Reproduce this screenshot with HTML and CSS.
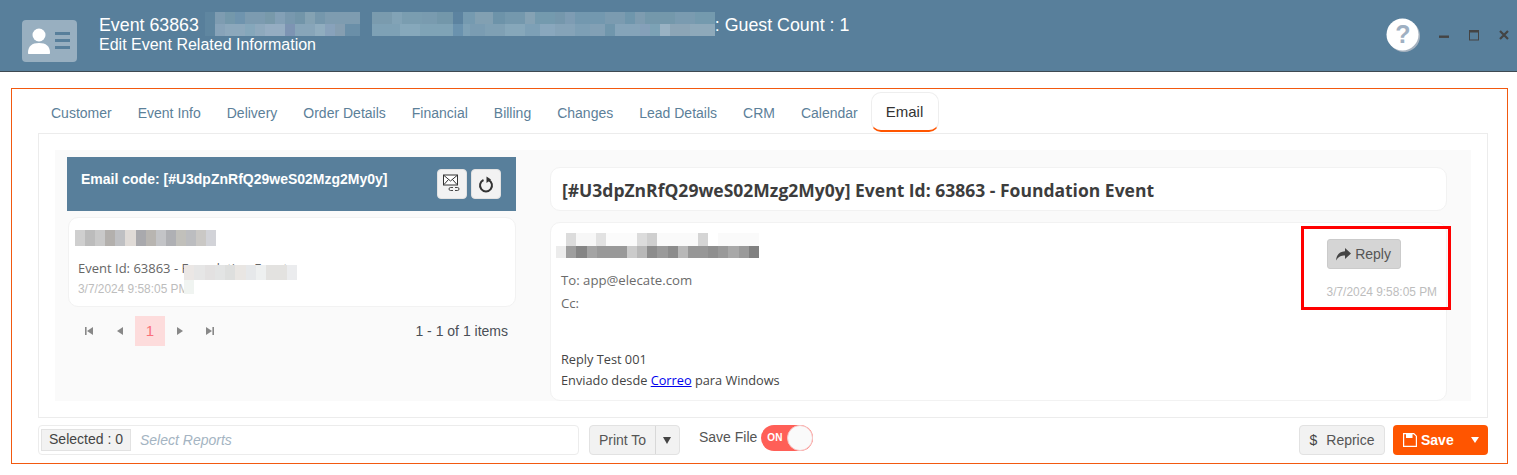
FILE: index.html
```html
<!DOCTYPE html>
<html lang="en">
<head>
  <meta charset="UTF-8">
  <title>Event 63863</title>
  <link rel="stylesheet" href="styles.css">
</head>
<body>
  <header class="topbar">
    <div class="topbar-icon">
      <svg width="55" height="42" viewBox="0 0 55 42">
        <circle cx="17" cy="15" r="6.5" fill="#fff"/>
        <path d="M6 33c0-7 4-10 11-10s11 3 11 10c0 .6-.4 1-1 1H7c-.6 0-1-.4-1-1z" fill="#fff"/>
        <rect x="33" y="12" width="15" height="3" fill="#587f9b"/>
        <rect x="33" y="19" width="15" height="3" fill="#587f9b"/>
        <rect x="33" y="26" width="15" height="3" fill="#587f9b"/>
      </svg>
    </div>
    <div class="topbar-text">
      <div class="topbar-title">
        <span>Event 63863</span>
        <span class="blur blur-guest"></span>
        <span>: Guest Count : 1</span>
      </div>
      <div class="topbar-sub">Edit Event Related Information</div>
    </div>
    <div class="topbar-actions">
      <svg class="help" width="35" height="35" viewBox="0 0 35 35">
        <circle cx="18" cy="18" r="16" fill="#a5b2bf"/>
        <circle cx="16.5" cy="16.5" r="16" fill="#fff"/>
        <text x="17" y="25" text-anchor="middle" class="help-mark">?</text>
      </svg>
      <svg width="10" height="10" viewBox="0 0 10 10" class="win-min"><rect y="5.5" width="10" height="2.4" fill="#444"/></svg>
      <svg width="10" height="11" viewBox="0 0 10 11" class="win-max"><rect x=".5" y="1" width="9" height="9" fill="none" stroke="#444"/><rect width="10" height="2.5" fill="#444"/></svg>
      <svg width="10" height="10" viewBox="0 0 10 10"><path d="M1 1l8 8M9 1l-8 8" stroke="#444" stroke-width="2.2"/></svg>
    </div>
  </header>

  <main class="panel">
    <nav class="tabs">
      <a class="tab">Customer</a>
      <a class="tab">Event Info</a>
      <a class="tab">Delivery</a>
      <a class="tab">Order Details</a>
      <a class="tab">Financial</a>
      <a class="tab">Billing</a>
      <a class="tab">Changes</a>
      <a class="tab">Lead Details</a>
      <a class="tab">CRM</a>
      <a class="tab">Calendar</a>
      <a class="tab active">Email</a>
    </nav>

    <section class="tab-body">
      <div class="email-area">
        <div class="email-list">
          <div class="list-head">
            <span class="list-code">Email code: [#U3dpZnRfQ29weS02Mzg2My0y]</span>
            <div class="list-btns">
              <button class="icon-btn">
                <svg width="18" height="20" viewBox="0 0 18 20">
                  <rect x=".5" y="1" width="14" height="10" fill="#fff" stroke="#333"/>
                  <path d="M1 1.500l6.500 5.500L14 1.500M1 10.500l4.500-5M14 10.500l-4.500-5" fill="none" stroke="#333"/>
                  <path d="M10 13.500H7.500a1.500 1.500 0 0 0 0 3H10M12 13.500h2.500a1.500 1.500 0 0 1 0 3H12" fill="none" stroke="#333" stroke-width=".9"/>
                </svg>
              </button>
              <button class="icon-btn">
                <svg width="16" height="18" viewBox="0 0 16 18">
                  <path d="M5.500 5a6 6 0 1 0 5 0" fill="none" stroke="#333" stroke-width="2"/>
                  <path d="M8.500 1.500v6.500L13 4.500z" fill="#333"/>
                </svg>
              </button>
            </div>
          </div>
          <div class="list-card">
            <span class="blur blur-sender"></span>
            <div class="list-subject">Event Id: 63863 - Foundation Event</div>
            <div class="stamp">3/7/2024 9:58:05 PM</div>
            <span class="blur blur-subject"></span>
            <span class="blur blur-subject-2"></span>
          </div>
          <div class="pager">
            <svg class="pg-icon" width="8" height="8" viewBox="0 0 8 8"><path d="M0 0h1.600v8H0zM8 0v8L2 4z"/></svg>
            <svg class="pg-icon" width="8" height="8" viewBox="0 0 8 8"><path d="M7 0v8L1 4z"/></svg>
            <span class="pg-num">1</span>
            <svg class="pg-icon" width="8" height="8" viewBox="0 0 8 8"><path d="M1 0v8l6-4z"/></svg>
            <svg class="pg-icon" width="8" height="8" viewBox="0 0 8 8"><path d="M0 0v8l6-4zM6.400 0H8v8H6.400z"/></svg>
            <span class="pg-info">1 - 1 of 1 items</span>
          </div>
        </div>

        <div class="email-view">
          <h2 class="view-title">[#U3dpZnRfQ29weS02Mzg2My0y] Event Id: 63863 - Foundation Event</h2>
          <div class="mail-card">
            <div class="mail-info">
              <span class="blur blur-from"></span>
              <div class="mail-line mail-to">To: app@elecate.com</div>
              <div class="mail-line mail-cc">Cc:</div>
              <div class="mail-line mail-msg">Reply Test 001</div>
              <div class="mail-line mail-sent">Enviado desde <a href="#">Correo</a> para Windows</div>
            </div>
            <div class="mail-side">
              <button class="reply-btn">
                <svg width="15" height="13" viewBox="0 0 15 13"><path d="M9 0l6 5.500L9 11V7.500C5 7.500 2.500 8.500 0 12.500 .5 7 3.500 3.500 9 3.300z" fill="#444"/></svg>
                Reply
              </button>
              <div class="stamp">3/7/2024 9:58:05 PM</div>
            </div>
            <div class="callout"></div>
          </div>
        </div>
      </div>
    </section>

    <footer class="actions">
      <div class="report-box">
        <span class="report-tag">Selected : 0</span>
        <span class="report-hint">Select Reports</span>
      </div>
      <div class="print-btn">
        <span class="print-label">Print To</span>
        <span class="print-caret"></span>
      </div>
      <span class="save-file">Save File</span>
      <div class="toggle"><span class="toggle-on">ON</span><span class="toggle-knob"></span></div>
      <button class="reprice-btn"><span class="dollar">$</span>Reprice</button>
      <div class="save-btn">
        <svg width="14" height="14" viewBox="0 0 14 14"><path d="M.6.600h10.200l2.600 2.600v10.200H.6z" fill="none" stroke="#fff" stroke-width="1.200"/><rect x="3" y="1" width="6.500" height="4" fill="#fff"/></svg>
        <span class="save-label">Save</span>
        <span class="save-caret"></span>
      </div>
    </footer>
  </main>
</body>
</html>
```

FILE: styles.css
```css
html, body {
  margin: 0;
  padding: 0;
  background: #fff;
  font-family: 'Liberation Sans', Arial, sans-serif;
  font-size: 14px;
  overflow: hidden;
}
.topbar {
  height: 71px;
  box-sizing: content-box;
  background: #587f9b;
  border-bottom: 1px solid #3e4a52;
  display: flex;
  align-items: flex-start;
  color: #fff;
}
.topbar-icon {
  width: 55px;
  height: 42px;
  margin: 20px 0 0 22px;
  background: #98afc0;
  border-radius: 4px;
}
.topbar-text {
  margin: 15px 0 0 22px;
  font-size: 16px;
  line-height: 20px;
}
.topbar-title {
  display: flex;
  align-items: center;
  height: 20px;
  font-size: 17.800px;
}
.topbar-actions {
  margin: 18px 8px 0 auto;
  display: flex;
  align-items: flex-start;
}
.help {
  margin-right: 18px;
}
.help-mark {
  font: bold 25px 'Liberation Sans', Arial, sans-serif;
  fill: #9fb0c2;
}
.topbar-actions svg + svg {
  margin-top: 12px;
  margin-right: 20px;
}
.topbar-actions svg:last-child {
  margin-right: 0;
}
.blur {
  display: block;
  flex: none;
}
.blur-guest {
  width: 510px;
  height: 24px;
  margin: -2px 0 0 6px;
  background:
    linear-gradient(90deg, #5f86a0 0 10px, #7e9cb1 10px 20px, #7498ab 20px 30px, #6f94ae 30px 40px, #7c9bb0 40px 60px, #7899aa 60px 70px, #83a0b6 70px 80px, #7898ae 80px 90px, #7295a9 90px 100px, #84a2b3 100px 110px, #7597ac 110px 120px, #7e9cb0 120px 155px, #587f9b 155px 167px, #7a9bae 167px 187px, #82a3b6 187px 197px, #7a9db0 197px 217px, #799baf 217px 232px, #7397aa 232px 248px, #5c83a0 248px 258px, #759ab0 258px 270px, #82a0b2 270px 288px, #6d93a9 288px 300px, #7498ad 300px 320px, #85a2b4 320px 330px, #749aae 330px 350px, #7597ac 350px 360px, #7e9cb3 360px 370px, #7398af 370px 400px, #7b9bb0 400px 420px, #6f96ac 420px 430px, #7e9cb0 430px 440px, #7498ab 440px 470px, #7a9bb0 470px 490px, #749aae 490px 510px) top / 100% 50% no-repeat,
    linear-gradient(90deg, #5f86a0 0 10px, #87a3b9 10px 20px, #8ca8bc 20px 40px, #85a7bb 40px 50px, #8ea9bd 50px 60px, #95adc2 60px 80px, #7d94b3 80px 90px, #87a5b9 90px 110px, #90adbf 110px 120px, #88a2bb 120px 130px, #859eb1 130px 140px, #6a8fa8 140px 155px, #587f9b 155px 167px, #7ea1b5 167px 195px, #86a8bb 195px 215px, #7fa3b6 215px 248px, #6a92ae 248px 258px, #7ea1b6 258px 265px, #7a9cb2 265px 280px, #7fa0b4 280px 300px, #86a7ba 300px 320px, #7da0b6 320px 335px, #89a7bd 335px 350px, #85a3b8 350px 370px, #7d9fb5 370px 385px, #82a0b5 385px 400px, #7096ac 400px 410px, #85a4b9 410px 435px, #85a0b9 435px 445px, #7ca2b5 445px 455px, #99b2c3 455px 465px, #8ca5b6 465px 485px, #8ea9ba 485px 510px) bottom / 100% 50% no-repeat;
}
.panel {
  margin: 16px 9px 0 11px;
  height: 371px;
  border: 1px solid #f2590f;
  padding: 3px 19px 0 26px;
}
.tabs {
  display: flex;
  height: 41px;
  align-items: stretch;
}
.tab {
  padding: 0 13px;
  line-height: 42px;
  color: #5c8099;
}
.tab.active {
  padding: 0 15px 0 14px;
  font-size: 15px;
  color: #333;
  line-height: 38px;
  background: #fff;
  border: 1px solid #eee;
  border-bottom: 2px solid #ff5500;
  border-radius: 10px;
  height: 37px;
}
.tab-body {
  height: 251px;
  border: 1px solid #ececec;
  padding: 16px;
}
.email-area {
  height: 100%;
  background: #fafafa;
  display: flex;
  padding: 7px 24px 0 12px;
  box-sizing: border-box;
}
.email-list {
  width: 449px;
  flex: none;
}
.list-head {
  height: 54px;
  background: #587f9b;
  display: flex;
  justify-content: space-between;
  padding: 12px 15px 0 14px;
  box-sizing: border-box;
  color: #fff;
}
.list-code {
  font-size: 14px;
  font-weight: bold;
  line-height: 20px;
}
.list-btns {
  display: flex;
  gap: 4px;
}
.icon-btn {
  width: 30px;
  height: 30px;
  padding: 0;
  background: #f2f2f2;
  border: 1px solid #e2e2e2;
  border-radius: 4px;
  display: flex;
  align-items: center;
  justify-content: center;
}
.list-card {
  position: relative;
  margin: 6px 0 0 1px;
  height: 90px;
  background: #fff;
  border: 1px solid #f2f2f2;
  border-radius: 10px;
  box-sizing: border-box;
  padding: 12px 9px 0;
  font-family: 'Open Sans', sans-serif;
  color: #666;
}
.blur-sender {
  width: 141px;
  height: 16px;
  margin-left: -3px;
  background: linear-gradient(90deg, #cfcfcf 0 10px, #bcbcbc 10px 20px, #c9c9c9 20px 30px, #b3b0ad 30px 40px, #bfc0c3 40px 50px, #e0dbd7 50px 61px, #a9a9ad 61px 71px, #b8b5b1 71px 81px, #c3c4c7 81px 91px, #afb0b4 91px 101px, #c1c0bb 101px 111px, #bcbdc0 111px 121px, #cac8c5 121px 131px, #d2d3d8 131px 141px);
}
.list-subject {
  margin-top: 13px;
  font-size: 13px;
  line-height: 18px;
}
.stamp {
  font-family: 'Liberation Sans', Arial, sans-serif;
  font-size: 11.900px;
  color: #bdbdbd;
  line-height: 14px;
}
.list-card .stamp {
  margin-top: 5px;
}
.blur-subject {
  position: absolute;
  left: 115px;
  top: 47px;
  width: 113px;
  height: 15px;
  background: linear-gradient(90deg, #ebe7e5 0 10px, #e6e6e6 10px 21px, #e3e1e1 21px 31px, #e3e4e4 31px 41px, #dedfde 41px 51px, #e9e6e3 51px 62px, #e6e8ea 62px 72px, #eef0f0 72px 82px, #e3e2e0 82px 103px, #ebecee 103px 113px);
}
.blur-subject-2 {
  position: absolute;
  left: 115px;
  top: 62px;
  width: 10px;
  height: 14px;
  background: #f0f4f1;
}
.pager {
  height: 30px;
  margin-top: 9px;
  display: flex;
  align-items: center;
  padding-left: 18px;
}
.pg-icon {
  fill: #888;
  margin-right: 23px;
}
.pg-num {
  width: 30px;
  height: 30px;
  margin: 0 11px 0 -12px;
  background: #fddcdc;
  color: #f9707a;
  font-size: 15px;
  text-align: center;
  line-height: 30px;
}
.pager .pg-icon:nth-of-type(3) {
  margin-right: 22px;
}
.pg-info {
  margin-left: auto;
  margin-right: 8px;
  color: #4a4f57;
}
.email-view {
  margin-left: 34px;
  width: 897px;
  flex: none;
}
.view-title {
  margin: 10px 0 0;
  height: 44px;
  box-sizing: border-box;
  background: #fff;
  border: 1px solid #f2f2f2;
  border-radius: 10px;
  padding-left: 11px;
  font: bold 17.500px/44px 'Open Sans', sans-serif;
  color: #3d3d3d;
}
.mail-card {
  position: relative;
  margin-top: 11px;
  height: 179px;
  box-sizing: border-box;
  background: #fff;
  border: 1px solid #f2f2f2;
  border-radius: 10px;
  display: flex;
  justify-content: space-between;
  padding: 10px 9px 0 10px;
}
.blur-from {
  width: 203px;
  height: 37px;
  margin-left: -5px;
  background:
    linear-gradient(90deg, #fff 0 10px, #dcdcdc 10px 20px, #f7f7f7 20px 40px, #e2e2e2 40px 50px, #fbfbfb 50px 81px, #dcdcdc 81px 91px, #cfcfcf 91px 101px, #fafafa 101px 142px, #d5d5d5 142px 152px, #fff 152px 162px, #fafafa 162px 203px) top / 100% 13px no-repeat,
    linear-gradient(90deg, #ececec 0 10px, #9e9e9e 10px 20px, #858585 20px 31px, #a4a4a4 31px 41px, #999 41px 71px, #cbcbcb 71px 81px, #b8b8b8 81px 91px, #8c8c8c 91px 101px, #9a9a9a 101px 112px, #8c8c8c 112px 122px, #b8b8b8 122px 132px, #979797 132px 152px, #8f8f8f 152px 162px, #999 162px 172px, #a8a8a8 172px 183px, #9a9a9a 183px 193px, #808080 193px 203px) 0 13px / 100% 12px no-repeat;
}
.mail-line {
  font-family: 'Open Sans', sans-serif;
  line-height: 20px;
}
.mail-to,
.mail-cc {
  font-size: 13.200px;
  color: #6b6b6b;
}
.mail-cc {
  margin-top: 3px;
}
.mail-msg,
.mail-sent {
  font-size: 12.750px;
  color: #444;
}
.mail-msg {
  margin-top: 36px;
}
.mail-sent {
  margin-top: 1px;
}
.mail-sent a {
  color: #0000ee;
}
.mail-side {
  padding-top: 6px;
  display: flex;
  flex-direction: column;
  align-items: flex-start;
}
.reply-btn {
  width: 74px;
  height: 30px;
  padding: 0;
  background: #d5d5d5;
  border: 1px solid #cbcbcb;
  border-radius: 3px;
  color: #555;
  font: 14px 'Liberation Sans', Arial, sans-serif;
  display: flex;
  align-items: center;
  justify-content: center;
  gap: 4px;
}
.mail-side .stamp {
  margin-top: 16px;
}
.callout {
  position: absolute;
  top: 3px;
  right: -5px;
  width: 150px;
  height: 84px;
  box-sizing: border-box;
  border: 3px solid #f00;
}
.actions {
  display: flex;
  align-items: flex-start;
  margin-top: 7px;
  height: 30px;
  color: #555;
}
.report-box {
  width: 541px;
  height: 30px;
  box-sizing: border-box;
  border: 1px solid #ececec;
  border-radius: 4px;
  display: flex;
  align-items: center;
  padding-left: 2px;
}
.report-tag {
  width: 90px;
  height: 22px;
  box-sizing: border-box;
  background: #f2f2f2;
  border: 1px solid #e2e2e2;
  text-align: center;
  line-height: 18px;
  color: #444;
}
.report-hint {
  margin-left: 9px;
  font-style: italic;
  color: #a4b4c2;
}
.print-btn {
  margin-left: 10px;
  width: 91px;
  height: 30px;
  box-sizing: border-box;
  background: #f2f2f2;
  border: 1px solid #e2e2e2;
  border-radius: 4px;
  display: flex;
  line-height: 28px;
}
.print-label {
  width: 65px;
  text-align: center;
  border-right: 1px solid #d8d8d8;
}
.print-caret {
  margin: 11px 0 0 7px;
  border: 4.500px solid transparent;
  border-top: 7px solid #444;
  border-bottom: 0;
  height: 0;
}
.save-file {
  margin-left: 19px;
  line-height: 24px;
}
.toggle {
  margin: 0 0 0 4px;
  width: 52px;
  height: 26px;
  box-sizing: border-box;
  background: #ff5f57;
  border-radius: 13px;
  position: relative;
  color: #fff;
  font-size: 10px;
  font-weight: bold;
  line-height: 26px;
  padding-left: 6px;
}
.toggle-knob {
  position: absolute;
  right: 0;
  top: 0;
  width: 26px;
  height: 26px;
  box-sizing: border-box;
  background: #fafafa;
  border: 1px solid #f6c9c9;
  border-radius: 50%;
}
.reprice-btn {
  margin-left: auto;
  width: 86px;
  height: 30px;
  padding: 0;
  background: #f2f2f2;
  border: 1px solid #e2e2e2;
  border-radius: 4px;
  color: #555;
  font: 14px 'Liberation Sans', Arial, sans-serif;
}
.dollar {
  margin-right: 9px;
  color: #444;
}
.save-btn {
  margin-left: 8px;
  width: 95px;
  height: 30px;
  background: #ff5500;
  border-radius: 4px;
  color: #fff;
  font-weight: bold;
  display: flex;
  align-items: center;
  padding-left: 10px;
  box-sizing: border-box;
}
.save-label {
  margin-left: 4px;
}
.save-caret {
  margin-left: 17px;
  border: 4.500px solid transparent;
  border-top: 6px solid #fff;
  border-bottom: 0;
}
```
